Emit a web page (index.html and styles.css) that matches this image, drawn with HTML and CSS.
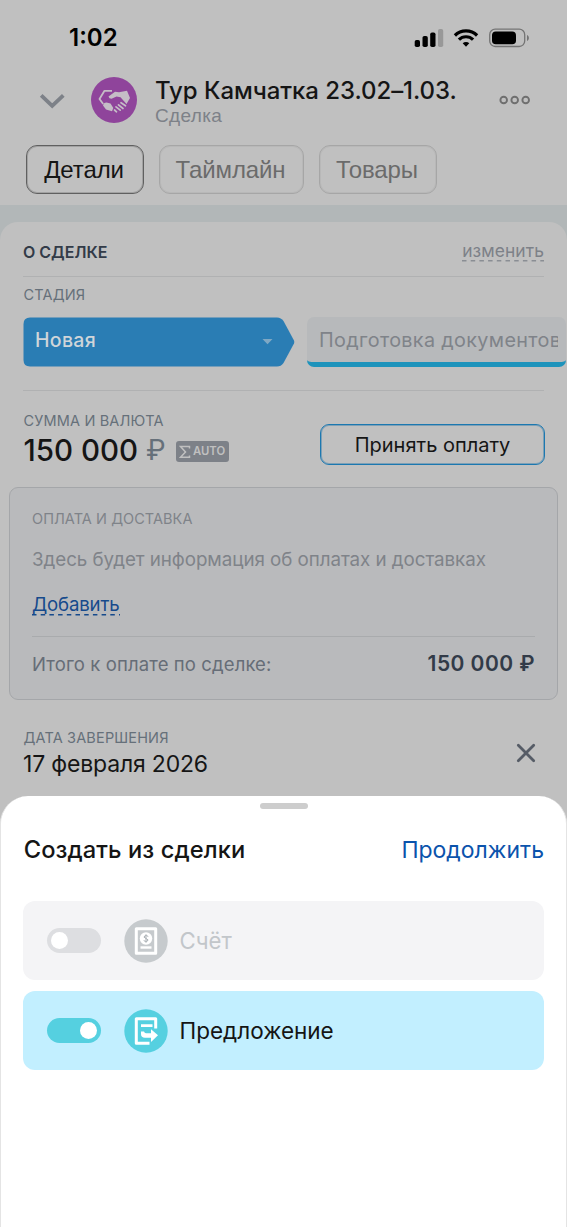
FILE: index.html
```html
<!DOCTYPE html>
<html lang="ru">
<head>
<meta charset="utf-8">
<title>Сделка</title>
<link rel="stylesheet" href="styles.css">
</head>
<body>
<div class="phone">
  <header class="top">
    <div class="status">
      <span class="time">1:02</span>
      <svg class="status-icons" width="116" height="22" viewBox="0 0 116 22">
        <g fill="#000">
          <rect x="0.700" y="13" width="5.300" height="7" rx="1.800"/>
          <rect x="8.500" y="9" width="5.300" height="11" rx="1.800"/>
          <rect x="16.200" y="5.500" width="5.300" height="14.500" rx="1.800"/>
          <rect x="24" y="2" width="5.200" height="18" rx="1.800" fill="#989898"/>
          <path d="M48.700 16.300a4.600 4.600 0 0 1 6.600 0L52 19.700z"/>
        </g>
        <g fill="none" stroke="#000" stroke-width="3.200">
          <path d="M40.900 8.500a15.700 15.700 0 0 1 22.200 0"/>
          <path d="M44.900 12.700a10 10 0 0 1 14.200 0"/>
        </g>
        <rect x="75.700" y="2.200" width="35" height="17.300" rx="5.500" fill="none" stroke="#747474" stroke-width="1.300"/>
        <rect x="78" y="4.500" width="24" height="12.800" rx="3.800"/>
        <path d="M113 8c2.500 1 2.500 5 0 6z" fill="#747474"/>
      </svg>
    </div>
    <div class="title-row">
      <svg class="chevron" width="26" height="18" viewBox="0 0 26 18"><path d="M2.200 4.300 13.200 14.800 24.300 4.300" fill="none" stroke="#7d8188" stroke-width="3.800"/></svg>
      <svg class="avatar" width="46" height="46" viewBox="0 0 46 46">
        <circle cx="23" cy="23" r="23" fill="#8f449b"/>
        <path d="M21 13.800H13.500L8.500 22 12.200 27" fill="none" stroke="#c5bdc6" stroke-width="1.800" stroke-linejoin="round"/>
        <path d="M17.500 19.500 24 14.800 28 15.300 36 13.800 39 21 35.500 27 29.500 20.300 25.500 19.500 20.500 21.700Q18 21.700 17.500 19.500z" fill="#c5bdc6"/>
        <path d="M12 28.500Q12.500 25.700 15.500 25.500L19.500 26.500 22.300 31 21 34.200 15 32.500z" fill="#c5bdc6"/>
        <path d="M30 25.700 34.500 28.800M27.500 27.800 32 31.500M25 29.800 29.200 33.200M23.500 33 25.500 34.800" stroke="#c5bdc6" stroke-width="1.700" stroke-linecap="round"/>
      </svg>
      <div class="title-text">
        <div class="title"><span>Тур Камчатка 23.02–1.03.</span></div>
        <div class="subtitle"><span>Сделка</span></div>
      </div>
      <svg class="more" width="32" height="10" viewBox="0 0 32 10"><g fill="none" stroke="#6f6f6f" stroke-width="1.900"><circle cx="4.700" cy="5" r="3.300"/><circle cx="15.700" cy="5" r="3.300"/><circle cx="26.700" cy="5" r="3.300"/></g></svg>
    </div>
    <nav class="tabs">
      <div class="tab tab-1 active"><span>Детали</span></div>
      <div class="tab tab-2"><span>Таймлайн</span></div>
      <div class="tab tab-3"><span>Товары</span></div>
    </nav>
  </header>
  <main class="card">
    <div class="card-head">
      <span class="card-title">О СДЕЛКЕ</span>
      <span class="edit">изменить<svg class="dash" width="82" height="1.500" viewBox="0 0 82 1.500"><path d="M0 .75H82" stroke="#8a8e94" stroke-width="1.500" stroke-dasharray="4.500 4.200"/></svg></span>
    </div>
    <div class="label stage-label"><span>СТАДИЯ</span></div>
    <div class="stages">
      <div class="stage-new">
        <svg class="stage-shape" width="272" height="50" viewBox="0 0 272 50"><path d="M7 .5H254Q258 .5 260.500 4L271 23.500Q271.500 25 271 26.500L260.500 46Q258 49.500 254 49.500H7Q.5 49.500 .5 43V7Q.5 .5 7 .5z" fill="#2a7db4"/><path d="M239.500 22h10l-5 5.300z" fill="#7fa8c4"/></svg>
        <span class="stage-name">Новая</span>
      </div>
      <div class="stage-next"><div class="clip"><span class="next-name">Подготовка документов</span></div></div>
    </div>
    <div class="sum">
      <div class="sum-left">
        <div class="label sum-label"><span>СУММА И ВАЛЮТА</span></div>
        <div class="amount"><span class="num">150 000</span><span class="rub">₽</span>
          <span class="auto"><svg width="12" height="14" viewBox="0 0 12 14"><path d="M10.500 3.500V1.500H1.500L6.500 7 1.500 12.300H10.500V10.500" fill="none" stroke="#c0c0c0" stroke-width="1.500"/></svg><span class="auto-text">AUTO</span></span>
        </div>
      </div>
      <div class="pay"><span>Принять оплату</span></div>
    </div>
    <section class="box">
      <div class="box-label"><span>ОПЛАТА И ДОСТАВКА</span></div>
      <div class="box-info"><span>Здесь будет информация об оплатах и доставках</span></div>
      <div class="box-add"><span>Добавить</span><svg class="dash" width="88" height="1.500" viewBox="0 0 88 1.500"><path d="M0 .75H88" stroke="#164a8c" stroke-width="1.500" stroke-dasharray="4.500 4.200"/></svg></div>
      <div class="total"><span class="total-label">Итого к оплате по сделке:</span><span class="total-sum">150 000 ₽</span></div>
    </section>
    <div class="due">
      <div>
        <div class="label due-label"><span>ДАТА ЗАВЕРШЕНИЯ</span></div>
        <div class="due-date"><span>17 февраля 2026</span></div>
      </div>
      <svg class="close" width="20" height="20" viewBox="0 0 20 20"><path d="M2.300 2.300 17.700 17.700M17.700 2.300 2.300 17.700" stroke="#565c66" stroke-width="2.800" stroke-linecap="round"/></svg>
    </div>
  </main>
  <section class="sheet">
    <div class="handle"></div>
    <div class="sheet-head"><span class="sheet-title">Создать из сделки</span><span class="go">Продолжить</span></div>
    <div class="option">
      <div class="toggle"><i></i></div>
      <svg class="opt-icon" width="44" height="44" viewBox="0 0 44 44">
        <circle cx="22" cy="22" r="21.700" fill="#c6cacd"/>
        <rect x="12.300" y="9.800" width="19.400" height="24.400" fill="none" stroke="#fff" stroke-width="3" stroke-linejoin="round"/>
        <circle cx="22" cy="19.500" r="6.200" fill="#fff"/>
        <rect x="16.500" y="27.300" width="11" height="2.400" fill="#fff"/>
        <path d="M24.300 17.500Q22.300 15.800 20.600 17T22 19.500T23.500 22T19.700 21.600M22 15.300V23.700" fill="none" stroke="#a9afb4" stroke-width="1"/>
      </svg>
      <span class="opt-name name-off">Счёт</span>
    </div>
    <div class="option on">
      <div class="toggle"><i></i></div>
      <svg class="opt-icon" width="44" height="44" viewBox="0 0 44 44">
        <circle cx="22" cy="22" r="21.700" fill="#55d0e0"/>
        <path d="M31.700 19.500V9.800H12.300V34.200H25.500" fill="none" stroke="#fff" stroke-width="3" stroke-linejoin="round"/>
        <path d="M17 15.200H28.500V18H17zM17 22.500H20Q20.500 24.300 22 24.300H27V20.300L34 26.300 27 33V28.800H21Q17 28.800 17 25z" fill="#fff"/>
      </svg>
      <span class="opt-name name-on">Предложение</span>
    </div>
  </section>
</div>
</body>
</html>
```
FILE: styles.css
```css
* { box-sizing: border-box; }
body { margin: 0; font-family: Inter, "Liberation Sans", sans-serif; }
svg { display: block; flex: none; }
span { white-space: nowrap; }

.phone { width: 567px; height: 1227px; overflow: hidden; background: #b2b7b8; display: flex; flex-direction: column; }
.top { height: 205px; background: #c0c0c0; flex: none; }
.status { height: 77px; padding: 0 37px 1px 69px; display: flex; justify-content: space-between; align-items: center; }
.status-icons { margin-top: -1px; }
.time { font-size: 24px; font-weight: 600; line-height: 76px; color: #000; }
.title-row { height: 46px; padding: 0 36px 0 39px; display: flex; align-items: center; }
.avatar { margin: 0 18px 0 26px; }
.title-text { flex: 1; height: 46px; }
.title { font-size: 24px; font-weight: 500; line-height: 28px; color: #151515; letter-spacing: -0.060px; }
.subtitle { font: 19px/21px "Liberation Sans", sans-serif; color: #7d8188; letter-spacing: 0.350px; }
.tabs { display: flex; gap: 15px; padding: 22px 0 0 26px; }
.tab { height: 49px; border: 1px solid #a6a6a6; box-shadow: inset 0 0 0 1px #b8b8b8; border-radius: 11px; display: flex; align-items: center; justify-content: center; padding-right: 2px; font: 24px "Liberation Sans", sans-serif; color: #6b6b6b; letter-spacing: -0.100px; }
.tab.active { border-color: #606060; box-shadow: inset 0 0 0 1px #a2a2a2; color: #151515; }
.tab-1 { width: 118px; }
.tab-2 { width: 145px; }
.tab-3 { width: 118px; }

.card { margin-top: 17px; height: 700px; flex: none; background: #c0c0c0; border-radius: 18px 18px 0 0; }
.card-head { height: 55px; margin: 0 23px; border-bottom: 1px solid #b0b1b2; display: flex; justify-content: space-between; }
.card-title { font-size: 16px; font-weight: 600; line-height: 60px; color: #323b48; }
.edit { position: relative; font-size: 17.400px; line-height: 57px; color: #7d8188; letter-spacing: 0.100px; }
.dash { position: absolute; left: 0; top: 38px; }
.label { font-size: 14.500px; color: #66707a; padding-left: 23.500px; letter-spacing: 0.150px; }
.stage-label { line-height: 35px; height: 40px; }
.stages { display: flex; gap: 12px; padding-left: 23px; height: 50px; }
.stage-new { position: relative; width: 272px; flex: none; }
.stage-shape { position: absolute; left: 0; top: 0; }
.stage-name { position: relative; display: block; padding-left: 12px; font-size: 19.500px; font-weight: 500; letter-spacing: 0.300px; line-height: 46px; color: #cfd5d9; }
.stage-next { flex: none; width: 259px; background: #b7b9bb; border-bottom: 5px solid #1e93bb; border-radius: 7px; padding: 0 8px 0 12px; }
.clip { overflow: hidden; height: 45px; }
.next-name { font-size: 19.800px; line-height: 46px; letter-spacing: 0.350px; color: #7f8389; }
.sum { margin: 23px 22px 0 0; height: 97px; display: flex; justify-content: space-between; position: relative; }
.sum::before { content: ""; position: absolute; left: 23px; right: 1px; top: 0; height: 1px; background: #b0b1b2; }
.sum-label { line-height: 20px; padding-top: 21px; }
.amount { display: flex; align-items: center; height: 39px; padding-left: 23.500px; font-size: 29.500px; line-height: 39px; color: #151515; }
.num { font-weight: 500; }
.rub { color: #66707a; width: 20px; margin-left: 8px; font-size: 28px; }
.auto { display: flex; align-items: center; width: 53px; height: 21px; margin: 2px 0 0 10px; padding-left: 3px; border-radius: 3px; background: #7d8188; color: #c0c0c0; gap: 2px; }
.auto-text { font-size: 11.300px; font-weight: 600; line-height: 21px; }
.pay { width: 225px; height: 41px; margin-top: 34px; border: 1px solid #1c78b0; box-shadow: inset 0 0 0 1px #7ea0b6; border-radius: 9px; display: flex; align-items: center; justify-content: center; font-size: 20px; color: #151515; }
.box { margin: 0 9px; height: 213px; border: 1px solid #a4a6a9; border-radius: 9px; background: #b9babc; padding: 0 22px; color: #7f8389; }
.box-label { font-size: 14.500px; line-height: 22px; padding-top: 20px; letter-spacing: 0.050px; }
.box-info { font-size: 18.800px; line-height: 30px; padding-top: 15px; letter-spacing: -0.060px; }
.box-add { position: relative; font-size: 18.600px; line-height: 34px; margin-top: 12px; height: 49px; color: #164a8c; letter-spacing: -0.150px; }
.box-add .dash { top: 27px; }
.total { border-top: 1px solid #a9abad; display: flex; justify-content: space-between; line-height: 54px; }
.total-label { font-size: 18.500px; color: #666d77; letter-spacing: 0.110px; }
.total-sum { font-size: 21px; font-weight: 600; color: #323b48; letter-spacing: 0.450px; }
.due { display: flex; justify-content: space-between; padding: 28px 31px 0 0; }
.due-label { line-height: 20px; }
.due-date { padding-left: 23px; font-size: 23px; line-height: 32px; color: #151515; letter-spacing: -0.180px; }
.close { margin-top: 15px; }

.sheet { position: absolute; left: 0; top: 796px; width: 567px; height: 431px; background: #fff; border: solid #e4e4e4; border-width: 0 1px; border-radius: 28px 28px 0 0; padding: 0 22px; }
.handle { width: 48px; height: 6px; margin: 7px auto 0; border-radius: 3px; background: #cdcdcd; }
.sheet-head { height: 92px; display: flex; justify-content: space-between; line-height: 82px; font-size: 23px; }
.sheet-title { padding-left: 0.700px; font-weight: 500; font-size: 23.700px; letter-spacing: 0.080px; color: #151515; }
.go { color: #0b53ac; }
.option { height: 79px; margin-bottom: 11px; border-radius: 12px; background: #f4f4f6; display: flex; align-items: center; padding-left: 23.500px; }
.option.on { background: #c2efff; }
.toggle { width: 54px; height: 25px; border-radius: 13px; background: #dddee1; padding: 4px; display: flex; }
.toggle i { width: 17px; height: 17px; border-radius: 50%; background: #fff; }
.on .toggle { background: #55d0e0; justify-content: flex-end; }
.opt-icon { margin: 0 12px 0 23px; }
.opt-name { color: #c2c6ca; }
.name-off { font-size: 22.200px; }
.name-on { font-size: 22.500px; color: #151515; }
```
